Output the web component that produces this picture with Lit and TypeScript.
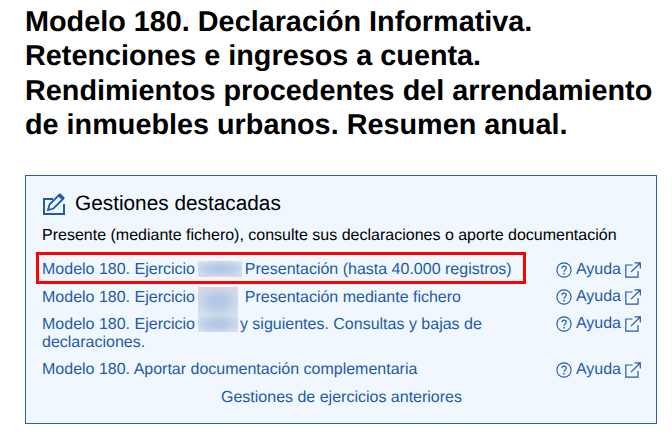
import { LitElement, html, css, svg } from "lit";
import { customElement } from "lit/decorators.js";

const helpIcon = html`<svg viewBox="0 0 16 16" width="16" height="16" aria-hidden="true">
  <circle cx="8" cy="8" r="7.1" fill="none" stroke="#1f5ba8" stroke-width="1.1"></circle>
  <path d="M5.8 6.2C5.8 4.9 6.9 4.1 8 4.1c1.3 0 2.3.8 2.3 2 0 1.7-2.3 1.8-2.3 3.6" fill="none" stroke="#1f5ba8" stroke-width="1.2"></path>
  <circle cx="8" cy="11.7" r=".85" fill="#1f5ba8"></circle>
</svg>`;

const extIcon = html`<svg viewBox="0 0 16 16" width="16" height="16" aria-hidden="true">
  <path d="M7.5 3H.8v12.2H13V9" fill="none" stroke="#1f5ba8" stroke-width="1.2"></path>
  <path d="M6 10.2L15.2 1M9.6 .8h5.7v5.6" fill="none" stroke="#1f5ba8" stroke-width="1.2"></path>
</svg>`;

const editIcon = svg`<path d="M11 7H2v15h20V12" fill="none" stroke="#1f5ba8" stroke-width="2"></path>
  <path d="M6 18l1.5-5.5L17.5 2.5l4 4-10 10z" fill="none" stroke="#1f5ba8" stroke-width="1.8"></path>
  <path d="M16 4l4 4 2.5-2.5-4-4z" fill="#1f5ba8"></path>`;

@customElement("app-root")
export class AppRoot extends LitElement {
  static styles = css`
    :host {
      display: block;
      width: 672px;
      height: 446px;
      box-sizing: border-box;
      padding: 4.5px 15px 0 25px;
      background: #fff;
      font-family: "Liberation Sans", Arial, sans-serif;
      color: #000;
      overflow: hidden;
      text-rendering: geometricPrecision;
    }
    h1 {
      margin: 0;
      font-size: 28.8px;
      line-height: 1.2;
      font-weight: 700;
      white-space: nowrap;
    }
    .box {
      margin-top: 32.26px;
      width: 632px;
      height: 249px;
      box-sizing: border-box;
      border: 1px solid #2a62a8;
      background: #f0f7ff;
      padding: 14px 15px 0 16px;
      font-size: 16px;
    }
    .head {
      display: flex;
      align-items: center;
      gap: 9px;
      height: 28px;
    }
    .head svg { display: block; }
    h2 {
      margin: 0;
      font-size: 20.8px;
      font-weight: 400;
      line-height: 28px;
    }
    .intro {
      margin: 8px 0 0;
      line-height: 20px;
      font-size: 16px;
      white-space: nowrap;
    }
    ul {
      list-style: none;
      margin: 15.5px 0 0;
      padding: 0;
    }
    li {
      position: relative;
      display: flex;
      justify-content: space-between;
      align-items: flex-start;
      margin-bottom: 8.8px;
      line-height: 18.4px;
      color: #1f5ba8;
    }
    .t { width: 480px; }
    .blur {
      display: inline-block;
      vertical-align: top;
      margin-left: -1.5px;
      background: radial-gradient(ellipse at center, #b3c9e5 25%, #dce4ef 100%);
    }
    .y1 {
      width: 44px;
      height: 16px;
      margin-top: -0.5px;
      margin-right: -1.5px;
      background:
        linear-gradient(to top, #e4d3de 0, transparent 3px),
        radial-gradient(ellipse at center, #b3c9e5 25%, #dce4ef 100%);
    }
    .y2 {
      width: 40px;
      height: 28px;
      margin-top: -1.7px;
      margin-bottom: -8px;
      margin-right: 2.5px;
      background:
        linear-gradient(to bottom, #e6ccd4 0, transparent 5px),
        radial-gradient(ellipse at center, #b3c9e5 25%, #dce4ef 100%);
    }
    .y3 {
      width: 40px;
      height: 17px;
      margin-top: -0.9px;
      margin-right: 2px;
    }
    .help-link {
      display: flex;
      align-items: center;
      white-space: nowrap;
      gap: 4px;
      margin-top: -0.5px;
    }
    .help-link svg { display: block; flex: none; margin-top: -1px; }
    .mark {
      position: absolute;
      left: -6px;
      top: -9.5px;
      width: 490px;
      height: 32px;
      box-sizing: border-box;
      border: 3px solid #f00;
    }
    .more {
      text-align: center;
      color: #1f5ba8;
      line-height: 18.4px;
      margin-top: 1.5px;
    }
  `;

  private row(content: unknown, marked = false) {
    return html`<li>
      <span class="t">${content}</span>
      <span class="help-link">${helpIcon}<span>Ayuda</span>${extIcon}</span>
      ${marked ? html`<span class="mark"></span>` : ""}
    </li>`;
  }

  render() {
    return html`
      <h1>Modelo 180. Declaración Informativa.<br />Retenciones e ingresos a cuenta.<br />Rendimientos procedentes del arrendamiento<br />de inmuebles urbanos. Resumen anual.</h1>
      <section class="box">
        <div class="head">
          <svg viewBox="0 0 24 24" width="24" height="24" aria-hidden="true">${editIcon}</svg>
          <h2>Gestiones destacadas</h2>
        </div>
        <p class="intro">Presente (mediante fichero), consulte sus declaraciones o aporte documentación</p>
        <ul>
          ${this.row(html`Modelo 180. Ejercicio <span class="blur y1"></span> Presentación (hasta 40.000 registros)`, true)}
          ${this.row(html`Modelo 180. Ejercicio <span class="blur y2"></span> Presentación mediante fichero`)}
          ${this.row(html`Modelo 180. Ejercicio <span class="blur y3"></span>y siguientes. Consultas y bajas de declaraciones.`)}
          ${this.row(html`Modelo 180. Aportar documentación complementaria`)}
        </ul>
        <div class="more">Gestiones de ejercicios anteriores</div>
      </section>
    `;
  }
}
